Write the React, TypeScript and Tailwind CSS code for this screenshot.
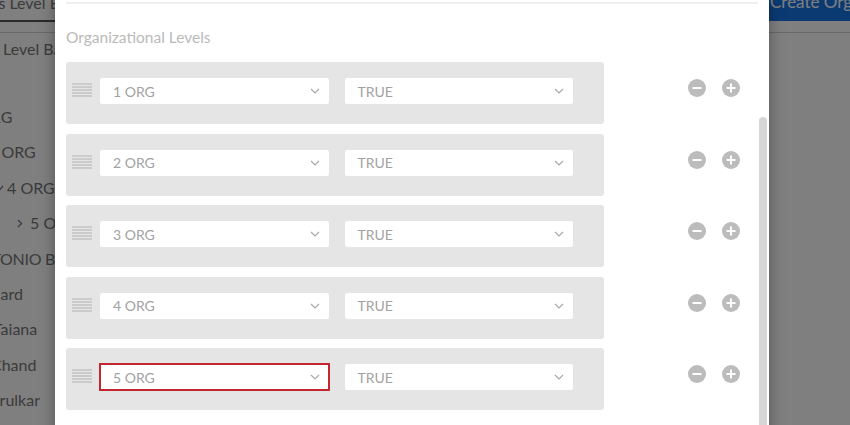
import type { ReactNode } from "react"

const levels = [ "1 ORG", "2 ORG", "3 ORG", "4 ORG", "5 ORG" ]

const Chevron = () => (
  <svg width="10" height="6" viewBox="0 0 10 6" fill="none">
    <path d="M1 1l4 4 4-4" stroke="#a8a8a8" strokeWidth="1.2" />
  </svg>
)

const Select = ({ value, active = false }: { value: string; active?: boolean }) => (
  <div
    className={`h-[26px] flex-1 flex items-center justify-between bg-white pl-[13px] pr-[9px] text-[14px] text-[#a2a2a2] ${
      active ? "rounded-none outline-2 -outline-offset-1 outline-[#c1272d]" : "rounded-[2px]"
    }`}
  >
    <span>{value}</span>
    <Chevron />
  </div>
)

const Handle = () => (
  <div className="w-[20px] mt-[5px] flex flex-col gap-px">
    {[ 0, 1, 2, 3, 4 ].map((i) => (
      <div key={i} className="h-[2px] bg-[#cbcbcb]" />
    ))}
  </div>
)

const RoundIcon = ({ plus = false }: { plus?: boolean }) => (
  <svg width="18" height="18" viewBox="0 0 18 18">
    <circle cx="9" cy="9" r="9" fill="#bcbcbc" />
    <rect x="4.5" y="8" width="9" height="2" fill="#fff" />
    {plus && <rect x="8" y="4.5" width="2" height="9" fill="#fff" />}
  </svg>
)

const TreeRow = ({ children }: { children?: ReactNode }) => (
  <div className="h-[35.4px] flex items-center whitespace-nowrap">{children}</div>
)

export default function App() {
  return (
    <div className="relative w-[850px] h-[425px] overflow-hidden bg-white font-['Lato',sans-serif] text-[#777]">
      {/* Page behind the modal */}
      <div className="flex h-[33px] border-b border-[#d4d4d4]">
        <div className="flex-1 overflow-hidden">
          <div className="-mt-[14px] h-[36px] w-[200px] flex items-center border-b-2 border-[#555] text-[16px] whitespace-nowrap">
            <span className="-ml-[74px]">Hierarchies Level Based</span>
          </div>
        </div>
        <div className="-mt-[18px] h-[39px] w-[93px] shrink-0 flex items-center pl-[13px] bg-[#1674e6] text-white text-[17px] whitespace-nowrap overflow-hidden">
          Create Org Hierarchy
        </div>
      </div>

      <div className="w-[200px] overflow-hidden text-[16px] text-[#767676]">
        <div className="h-[31px] flex items-center pl-[3px]">Level Based</div>
        <TreeRow />
        <TreeRow>
          <span className="-ml-[22px]">ORG</span>
        </TreeRow>
        <TreeRow>
          <span className="-ml-[12px]">2 ORG</span>
        </TreeRow>
        <TreeRow>
          <svg className="-ml-[4px] mr-[3px]" width="8" height="6" viewBox="0 0 8 6" fill="none">
            <path d="M1 1l3 3.5L7 1" stroke="#767676" strokeWidth="1.2" />
          </svg>
          <span>4 ORG</span>
        </TreeRow>
        <TreeRow>
          <svg className="ml-[17px] mr-[7px]" width="6" height="9" viewBox="0 0 6 9" fill="none">
            <path d="M1 1l3.5 3.5L1 8" stroke="#767676" strokeWidth="1.2" />
          </svg>
          <span>5 ORG</span>
        </TreeRow>
        <TreeRow>
          <span className="-ml-[31px] tracking-[-0.3px]">ANTONIO BICHARA</span>
        </TreeRow>
        <TreeRow>
          <span className="-ml-[33px]">Bernard</span>
        </TreeRow>
        <TreeRow>
          <span className="-ml-[7px]">Taiana</span>
        </TreeRow>
        <TreeRow>
          <span className="-ml-[9px]">Chand</span>
        </TreeRow>
        <TreeRow>
          <span className="-ml-[16px]">Tarulkar</span>
        </TreeRow>
      </div>

      {/* Overlay */}
      <div className="absolute inset-0 bg-black/50" />

      {/* Modal */}
      <div className="absolute left-[55px] top-0 -bottom-[20px] w-[714px] bg-white shadow-[0_0_14px_rgba(0,0,0,0.35)]">
        <div className="pl-[11px] pt-[2px]">
          <div className="h-[2px] w-[692px] bg-[#efefef]" />
          <div className="mt-[22px] text-[15.5px] leading-[22px] text-[#bababa]">Organizational Levels</div>

          <div className="mt-[14px] flex flex-col gap-[9.5px]">
            {levels.map((level, i) => (
              <div key={level} className="flex items-start">
                <div className="w-[538px] h-[62px] flex items-start gap-[8px] pt-[16px] pl-[6px] pr-[31px] bg-[#e5e5e5] rounded-[3px]">
                  <Handle />
                  <div className="flex-1 flex gap-[16px]">
                    <Select value={level} active={i === 4} />
                    <Select value="TRUE" />
                  </div>
                </div>
                <div className="ml-[84px] mt-[17px] flex gap-[16px]">
                  <RoundIcon />
                  <RoundIcon plus />
                </div>
              </div>
            ))}
          </div>
        </div>

        {/* Scrollbar */}
        <div className="absolute left-[704px] top-[117px] bottom-0 w-[8px] rounded-full bg-[#d6d6d6]" />
      </div>
    </div>
  )
}
